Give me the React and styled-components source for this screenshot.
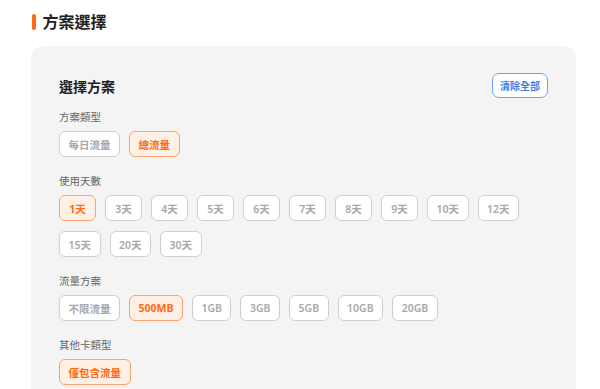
import React, { useState } from "react";
import styled, { createGlobalStyle } from "styled-components";

const GlobalStyle = createGlobalStyle`
  body {
    margin: 0;
    background: #fff;
    font-family: "Noto Sans", "Noto Sans CJK TC", sans-serif;
  }
`;

const Page = styled.div`
  padding: 11px 24px 0 31px;
`;

const Heading = styled.h2`
  display: flex;
  align-items: center;
  gap: 7px;
  margin: 0 0 13px 1px;
  font-size: 16px;
  line-height: 22px;
  font-weight: 700;
  color: #222;

  &::before {
    content: "";
    width: 3.5px;
    height: 16px;
    border-radius: 2px;
    background: #ff6a13;
  }
`;

const Card = styled.div`
  background: #f4f4f4;
  border-radius: 12px;
  padding: 27px 28px 20px;
`;

const CardHeader = styled.div`
  display: flex;
  align-items: center;
  justify-content: space-between;
  height: 25px;
  margin-bottom: 11px;
`;

const CardTitle = styled.h3`
  margin: 0;
  font-size: 14px;
  font-weight: 700;
  color: #222;
`;

const ClearButton = styled.button`
  height: 25px;
  padding: 0 7px;
  border: 1px solid #6aa4fa;
  border-radius: 7px;
  background: #fff;
  color: #3d7ef0;
  font-family: inherit;
  font-size: 10px;
  font-weight: 700;
  cursor: pointer;
`;

const Section = styled.div`
  margin-bottom: 16px;
`;

const Label = styled.div`
  font-size: 10.5px;
  line-height: 16px;
  color: #666;
  margin-bottom: 6px;
`;

const Options = styled.div`
  display: flex;
  flex-wrap: wrap;
  gap: 10px 9px;
`;

const Chip = styled.button`
  height: 26px;
  min-width: 37px;
  padding: 0 8.5px;
  border-radius: 6px;
  font-family: inherit;
  font-size: 10.5px;
  cursor: pointer;
  border: 1px solid ${p => (p.$active ? "#ffa26b" : "#cfcfcf")};
  background: ${p => (p.$active ? "#fff0e5" : "#fff")};
  color: ${p => (p.$active ? "#ff6a13" : "#a8a8a8")};
  font-weight: ${p => (p.$active ? 700 : 600)};
`;

const sections = [
  { key: "type", label: "方案類型", options: ["每日流量", "總流量"], def: "總流量" },
  {
    key: "days",
    label: "使用天數",
    options: ["1天", "3天", "4天", "5天", "6天", "7天", "8天", "9天", "10天", "12天", "15天", "20天", "30天"],
    def: "1天",
  },
  {
    key: "data",
    label: "流量方案",
    options: ["不限流量", "500MB", "1GB", "3GB", "5GB", "10GB", "20GB"],
    def: "500MB",
  },
  { key: "other", label: "其他卡類型", options: ["僅包含流量"], def: "僅包含流量" },
];

const App = () => {
  const [selected, setSelected] = useState(
    Object.fromEntries(sections.map(s => [s.key, s.def]))
  );

  return (
    <Page>
      <GlobalStyle />
      <Heading>方案選擇</Heading>
      <Card>
        <CardHeader>
          <CardTitle>選擇方案</CardTitle>
          <ClearButton onClick={() => setSelected({})}>清除全部</ClearButton>
        </CardHeader>
        {sections.map(s => (
          <Section key={s.key}>
            <Label>{s.label}</Label>
            <Options>
              {s.options.map(o => (
                <Chip
                  key={o}
                  $active={selected[s.key] === o}
                  onClick={() => setSelected({ ...selected, [s.key]: o })}
                >
                  {o}
                </Chip>
              ))}
            </Options>
          </Section>
        ))}
      </Card>
    </Page>
  );
};

export default App;
